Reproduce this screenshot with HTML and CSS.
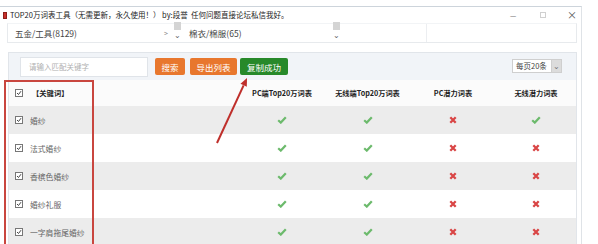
FILE: index.html
```html
<!DOCTYPE html>
<html lang="zh">
<head>
<meta charset="utf-8">
<link rel="stylesheet" href="styles.css">
</head>
<body>
<div class="window">
  <div class="titlebar">
    <span class="app-icon"></span>
    <span class="title">TOP20万词表工具（无需更新，永久使用！） by:段誉&nbsp; 任何问题直接论坛私信我好。</span>
    <div class="controls">
      <span class="ctl min">—</span>
      <span class="ctl max"></span>
      <span class="ctl close">×</span>
    </div>
  </div>

  <div class="cats">
    <div class="cat cat1">
      <span class="cat-text">五金/工具(8129)</span>
      <span class="gt">&gt;</span>
      <span class="scroll"><span class="thumb"></span><span class="chev">⌄</span></span>
    </div>
    <div class="cat cat2">
      <span class="cat-text">棉衣/棉服(65)</span>
      <span class="scroll"><span class="thumb"></span><span class="chev">⌄</span></span>
    </div>
    <div class="cat cat3"></div>
  </div>

  <div class="panel">
    <div class="toolbar">
      <div class="search-input">请输入匹配关键字</div>
      <span class="btn orange b-search">搜索</span>
      <span class="btn orange b-export">导出列表</span>
      <span class="btn green b-copy">复制成功</span>
      <div class="pager">
        <span class="pager-box">每页20条</span>
        <span class="pager-arrow">⌄</span>
      </div>
    </div>

    <div class="table">
      <div class="row head">
        <div class="kw"><svg class="cb" viewBox="0 0 8 8"><rect x="0.5" y="0.5" width="7" height="7" fill="#fff" stroke="#777"/><path d="M2 4 L3.5 5.5 L6 2.2" fill="none" stroke="#444" stroke-width="1"/></svg><b>【关键词】</b></div>
        <div class="col">PC端Top20万词表</div>
        <div class="col">无线端Top20万词表</div>
        <div class="col">PC潜力词表</div>
        <div class="col">无线潜力词表</div>
      </div>
      <div class="row odd">
        <div class="kw"><svg class="cb" viewBox="0 0 8 8"><rect x="0.5" y="0.5" width="7" height="7" fill="#fff" stroke="#777"/><path d="M2 4 L3.5 5.5 L6 2.2" fill="none" stroke="#444" stroke-width="1"/></svg>婚纱</div>
        <div class="col"><svg class="ok" viewBox="0 0 10 8"><path d="M1.2 4.2 L3.8 6.6 L8.8 1.2" fill="none" stroke="#6cba6c" stroke-width="2.2"/></svg></div>
        <div class="col"><svg class="ok" viewBox="0 0 10 8"><path d="M1.2 4.2 L3.8 6.6 L8.8 1.2" fill="none" stroke="#6cba6c" stroke-width="2.2"/></svg></div>
        <div class="col"><svg class="no" viewBox="0 0 8 8"><path d="M1.3 1.3 L6.7 6.7 M6.7 1.3 L1.3 6.7" stroke="#d94545" stroke-width="2.3"/></svg></div>
        <div class="col"><svg class="ok" viewBox="0 0 10 8"><path d="M1.2 4.2 L3.8 6.6 L8.8 1.2" fill="none" stroke="#6cba6c" stroke-width="2.2"/></svg></div>
      </div>
      <div class="row even">
        <div class="kw"><svg class="cb" viewBox="0 0 8 8"><rect x="0.5" y="0.5" width="7" height="7" fill="#fff" stroke="#777"/><path d="M2 4 L3.5 5.5 L6 2.2" fill="none" stroke="#444" stroke-width="1"/></svg>法式婚纱</div>
        <div class="col"><svg class="ok" viewBox="0 0 10 8"><path d="M1.2 4.2 L3.8 6.6 L8.8 1.2" fill="none" stroke="#6cba6c" stroke-width="2.2"/></svg></div>
        <div class="col"><svg class="ok" viewBox="0 0 10 8"><path d="M1.2 4.2 L3.8 6.6 L8.8 1.2" fill="none" stroke="#6cba6c" stroke-width="2.2"/></svg></div>
        <div class="col"><svg class="no" viewBox="0 0 8 8"><path d="M1.3 1.3 L6.7 6.7 M6.7 1.3 L1.3 6.7" stroke="#d94545" stroke-width="2.3"/></svg></div>
        <div class="col"><svg class="no" viewBox="0 0 8 8"><path d="M1.3 1.3 L6.7 6.7 M6.7 1.3 L1.3 6.7" stroke="#d94545" stroke-width="2.3"/></svg></div>
      </div>
      <div class="row odd">
        <div class="kw"><svg class="cb" viewBox="0 0 8 8"><rect x="0.5" y="0.5" width="7" height="7" fill="#fff" stroke="#777"/><path d="M2 4 L3.5 5.5 L6 2.2" fill="none" stroke="#444" stroke-width="1"/></svg>香槟色婚纱</div>
        <div class="col"><svg class="ok" viewBox="0 0 10 8"><path d="M1.2 4.2 L3.8 6.6 L8.8 1.2" fill="none" stroke="#6cba6c" stroke-width="2.2"/></svg></div>
        <div class="col"><svg class="ok" viewBox="0 0 10 8"><path d="M1.2 4.2 L3.8 6.6 L8.8 1.2" fill="none" stroke="#6cba6c" stroke-width="2.2"/></svg></div>
        <div class="col"><svg class="no" viewBox="0 0 8 8"><path d="M1.3 1.3 L6.7 6.7 M6.7 1.3 L1.3 6.7" stroke="#d94545" stroke-width="2.3"/></svg></div>
        <div class="col"><svg class="no" viewBox="0 0 8 8"><path d="M1.3 1.3 L6.7 6.7 M6.7 1.3 L1.3 6.7" stroke="#d94545" stroke-width="2.3"/></svg></div>
      </div>
      <div class="row even">
        <div class="kw"><svg class="cb" viewBox="0 0 8 8"><rect x="0.5" y="0.5" width="7" height="7" fill="#fff" stroke="#777"/><path d="M2 4 L3.5 5.5 L6 2.2" fill="none" stroke="#444" stroke-width="1"/></svg>婚纱礼服</div>
        <div class="col"><svg class="ok" viewBox="0 0 10 8"><path d="M1.2 4.2 L3.8 6.6 L8.8 1.2" fill="none" stroke="#6cba6c" stroke-width="2.2"/></svg></div>
        <div class="col"><svg class="ok" viewBox="0 0 10 8"><path d="M1.2 4.2 L3.8 6.6 L8.8 1.2" fill="none" stroke="#6cba6c" stroke-width="2.2"/></svg></div>
        <div class="col"><svg class="no" viewBox="0 0 8 8"><path d="M1.3 1.3 L6.7 6.7 M6.7 1.3 L1.3 6.7" stroke="#d94545" stroke-width="2.3"/></svg></div>
        <div class="col"><svg class="no" viewBox="0 0 8 8"><path d="M1.3 1.3 L6.7 6.7 M6.7 1.3 L1.3 6.7" stroke="#d94545" stroke-width="2.3"/></svg></div>
      </div>
      <div class="row odd">
        <div class="kw"><svg class="cb" viewBox="0 0 8 8"><rect x="0.5" y="0.5" width="7" height="7" fill="#fff" stroke="#777"/><path d="M2 4 L3.5 5.5 L6 2.2" fill="none" stroke="#444" stroke-width="1"/></svg>一字肩拖尾婚纱</div>
        <div class="col"><svg class="ok" viewBox="0 0 10 8"><path d="M1.2 4.2 L3.8 6.6 L8.8 1.2" fill="none" stroke="#6cba6c" stroke-width="2.2"/></svg></div>
        <div class="col"><svg class="ok" viewBox="0 0 10 8"><path d="M1.2 4.2 L3.8 6.6 L8.8 1.2" fill="none" stroke="#6cba6c" stroke-width="2.2"/></svg></div>
        <div class="col"><svg class="no" viewBox="0 0 8 8"><path d="M1.3 1.3 L6.7 6.7 M6.7 1.3 L1.3 6.7" stroke="#d94545" stroke-width="2.3"/></svg></div>
        <div class="col"><svg class="no" viewBox="0 0 8 8"><path d="M1.3 1.3 L6.7 6.7 M6.7 1.3 L1.3 6.7" stroke="#d94545" stroke-width="2.3"/></svg></div>
      </div>
    </div>
  </div>

  <div class="annot-box"></div>
  <svg class="annot-arrow" viewBox="0 0 582 238" width="582" height="238">
    <line x1="217" y1="136" x2="243.6" y2="78.3" stroke="#bf2f2b" stroke-width="2"/>
    <polygon points="247,71 246.8,79.7 240.5,76.8" fill="#bf2f2b"/>
  </svg>
</div>
</body>
</html>
```

FILE: styles.css
```css
* { box-sizing: border-box; }

body {
  margin: 0;
  padding-top: 6px;
  background: #fff;
  font-family: "Noto Sans CJK SC", "Noto Sans", sans-serif;
  color: #333;
}

.window {
  position: relative;
  width: 582px;
  height: 238px;
  border-top: 1px solid #cdd4db;
  border-right: 1px solid #dfe3e7;
  overflow: hidden;
}

/* title bar */
.titlebar {
  display: flex;
  align-items: center;
  height: 16px;
}
.app-icon {
  width: 4px;
  height: 7px;
  margin-left: 3px;
  background: #c8302a;
  border: 1px solid #8e1f1a;
}
.title {
  margin-left: 3px;
  font-size: 7.5px;
  color: #222;
  white-space: nowrap;
  line-height: 1;
}
.controls {
  margin-left: auto;
  display: flex;
  align-items: center;
}
.ctl {
  display: block;
  font-size: 9px;
  line-height: 1;
  color: #555;
}
.min { width: 8px; font-size: 7px; margin-right: 22px; }
.max { width: 6px; height: 6px; border: 1px solid #d0d0d0; margin-right: 21px; }
.close { font-size: 10px; margin-right: 4px; }

/* category dropdowns */
.cats {
  display: flex;
  height: 20px;
  margin: 0 4px 0 7px;
  border: 1px solid #e7eaed;
  border-top-color: #f2f4f6;
}
.cat {
  display: flex;
  align-items: center;
  position: relative;
  font-size: 8.5px;
  color: #444;
}
.cat1 { width: 176px; padding-left: 7px; }
.cat2 { width: 242px; padding-left: 5px; }
.cat3 { flex: 1; border-left: 1px solid #eceef1; }
.gt { margin-left: auto; margin-right: 5px; font-size: 7px; color: #888; }
.scroll {
  align-self: stretch;
  display: flex;
  flex-direction: column;
  align-items: center;
  width: 8px;
  margin-top: -2px;
  margin-right: 3px;
}
.cat2 .scroll { margin-left: auto; margin-right: 86px; }
.thumb { width: 7px; height: 8px; background: #d4d4d4; }
.chev { font-size: 8px; line-height: 8px; margin-top: 1px; color: #666; }

/* main panel */
.panel {
  margin: 9px 5px 0 8px;
  width: 569px;
  height: 200px;
  border: 1px solid #e1e5ea;
  background: #fff;
}
.toolbar {
  display: flex;
  align-items: center;
  height: 27px;
  padding-left: 11px;
  background: #f1f4f8;
}
.search-input {
  width: 128px;
  height: 20px;
  padding-left: 8px;
  display: flex;
  align-items: center;
  background: #fff;
  border: 1px solid #e0e4e9;
  font-size: 7.5px;
  color: #b0b0b0;
}
.btn {
  display: flex;
  align-items: center;
  justify-content: center;
  height: 17px;
  border-radius: 2px;
  font-size: 8.5px;
  color: #fff;
}
.orange { background: #e8772e; }
.green { background: #27892a; }
.b-search { width: 30px; margin-left: 7px; }
.b-export { width: 47px; margin-left: 5px; }
.b-copy { width: 48px; margin-left: 3px; }

.pager {
  margin-left: auto;
  margin-right: 14px;
  display: flex;
  height: 14px;
  margin-top: -2px;
}
.pager-box {
  width: 40px;
  display: flex;
  align-items: center;
  padding-left: 3px;
  background: #fff;
  border: 1px solid #cfcfcf;
  font-size: 7.5px;
  color: #444;
}
.pager-arrow {
  width: 10px;
  display: flex;
  align-items: center;
  justify-content: center;
  background: #dcdcdc;
  border: 1px solid #cfcfcf;
  border-left: none;
  font-size: 8px;
  line-height: 1;
  color: #777;
}

/* table */
.row {
  display: grid;
  grid-template-columns: 230px 86px 85px 86px 80px;
  height: 28px;
  align-items: center;
}
.row.head { height: 26px; background: #fbfbfb; }
.row.odd { background: #ececec; }
.row.even { background: #fff; }
.kw {
  display: flex;
  align-items: center;
  padding-left: 6px;
  font-size: 7.8px;
  color: #666;
}
.kw b { font-weight: 700; color: #222; font-size: 7.3px; margin-left: 2px; }
.cb { width: 8px; height: 8px; margin-right: 7px; flex: none; }
.col {
  display: flex;
  justify-content: center;
  align-items: center;
  font-size: 7.2px;
  font-weight: 700;
  color: #222;
  white-space: nowrap;
}
.ok { width: 10px; height: 8px; }
.no { width: 8px; height: 8px; }

/* annotations */
.annot-box {
  position: absolute;
  left: 4px;
  top: 73px;
  width: 90px;
  height: 200px;
  border: 2px solid #c9463f;
}
.annot-arrow {
  position: absolute;
  left: 0;
  top: 0;
}
```
